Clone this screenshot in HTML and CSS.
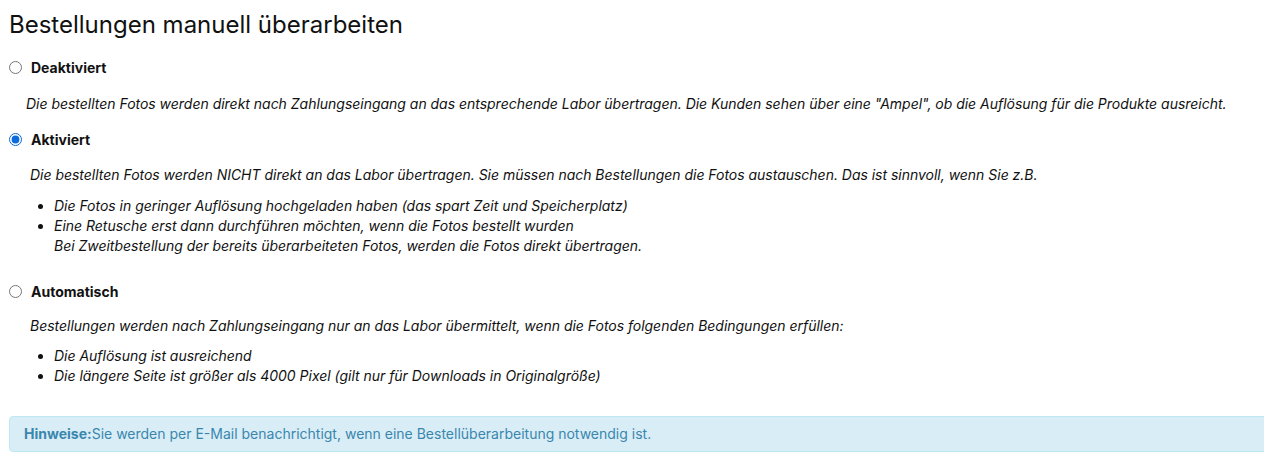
FILE: index.html
```html
<!DOCTYPE html>
<html lang="de">
<head>
<meta charset="utf-8">
<link rel="stylesheet" href="styles.css">
</head>
<body>
<div class="page">
  <h2 class="title">Bestellungen manuell überarbeiten</h2>

  <label class="opt opt-first">
    <input type="radio" name="mode" class="radio">
    <span class="opt-label">Deaktiviert</span>
  </label>
  <p class="desc desc-first">Die bestellten Fotos werden direkt nach Zahlungseingang an das entsprechende Labor übertragen. Die Kunden sehen über eine "Ampel", ob die Auflösung für die Produkte ausreicht.</p>

  <label class="opt">
    <input type="radio" name="mode" class="radio" checked>
    <span class="opt-label">Aktiviert</span>
  </label>
  <div class="desc desc-wide">
    <p class="desc-p">Die bestellten Fotos werden NICHT direkt an das Labor übertragen. Sie müssen nach Bestellungen die Fotos austauschen. Das ist sinnvoll, wenn Sie z.B.</p>
    <ul class="list">
      <li>Die Fotos in geringer Auflösung hochgeladen haben (das spart Zeit und Speicherplatz)</li>
      <li>Eine Retusche erst dann durchführen möchten, wenn die Fotos bestellt wurden<br>Bei Zweitbestellung der bereits überarbeiteten Fotos, werden die Fotos direkt übertragen.</li>
    </ul>
  </div>

  <label class="opt opt-gap">
    <input type="radio" name="mode" class="radio">
    <span class="opt-label">Automatisch</span>
  </label>
  <div class="desc">
    <p class="desc-p">Bestellungen werden nach Zahlungseingang nur an das Labor übermittelt, wenn die Fotos folgenden Bedingungen erfüllen:</p>
    <ul class="list">
      <li>Die Auflösung ist ausreichend</li>
      <li>Die längere Seite ist größer als 4000 Pixel (gilt nur für Downloads in Originalgröße)</li>
    </ul>
  </div>

  <div class="alert"><strong>Hinweise:</strong>Sie werden per E-Mail benachrichtigt, wenn eine Bestellüberarbeitung notwendig ist.</div>
</div>
</body>
</html>
```

FILE: styles.css
```css
html, body {
  margin: 0;
  padding: 0;
  background: #fff;
}
body {
  font-family: Inter, "Noto Sans", sans-serif;
  font-size: 14px;
  color: #111;
  overflow: hidden;
}
.page {
  padding: 0 0 0 9px;
  width: 1280px;
}
.title {
  font-size: 24px;
  font-weight: 400;
  margin: 0;
  padding-top: 10px;
  line-height: 30px;
  color: #111;
}
.opt {
  display: flex;
  align-items: center;
  height: 20px;
  margin-top: 15px;
}
.opt-first {
  margin-top: 17px;
}
.opt-gap {
  margin-top: 25px;
}
.radio {
  margin: 0 9px 0 0;
  width: 13px;
  height: 13px;
  accent-color: #0b6bdc;
}
.opt-label {
  font-weight: 700;
  font-size: 14px;
  color: #111;
}
.desc {
  margin: 0;
  padding-left: 21px;
  font-style: italic;
  font-size: 14px;
  line-height: 20px;
  letter-spacing: -0.02px;
}
.desc-first {
  margin-top: 17px;
  padding-left: 17px;
}
.desc-p {
  margin: 15px 0 0 0;
}
.list {
  margin: 10px 0 0 0;
  padding-left: 24px;
}
.desc-wide .desc-p {
  margin-top: 16px;
}
.desc-wide .list {
  margin-top: 11px;
}
.alert {
  margin-top: 30px;
  background: #d9edf7;
  border: 1px solid #bce8f1;
  border-radius: 4px;
  padding: 8px 14px;
  line-height: 18px;
  color: #3a87ad;
  font-size: 14px;
}
.alert strong {
  color: #3a87ad;
}
```
